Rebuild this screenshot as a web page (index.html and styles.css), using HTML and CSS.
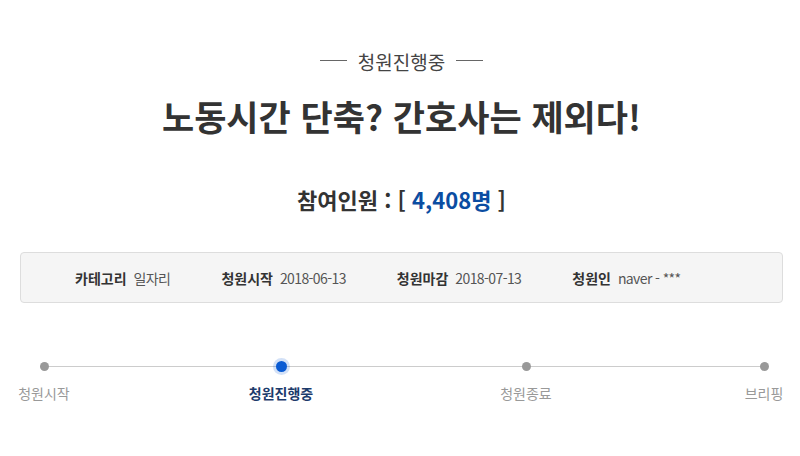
FILE: index.html
```html
<!DOCTYPE html>
<html lang="ko">
<head>
<meta charset="utf-8">
<title>청원진행중</title>
<link rel="stylesheet" href="styles.css">
</head>
<body>
<div class="wrap">
  <div class="status"><span class="dash"></span><span class="status-text">청원진행중</span><span class="dash"></span></div>
  <h1 class="title">노동시간 단축? 간호사는 제외다!</h1>
  <div class="count">참여인원 : [ <span class="num">4,408명</span> ]</div>
  <ul class="info">
    <li><strong>카테고리</strong><span>일자리</span></li>
    <li><strong>청원시작</strong><span>2018-06-13</span></li>
    <li><strong>청원마감</strong><span>2018-07-13</span></li>
    <li><strong>청원인</strong><span>naver - ***</span></li>
  </ul>
  <ol class="steps">
    <li class="step"><span class="dot"></span><span class="label">청원시작</span></li>
    <li class="step active"><span class="dot"></span><span class="label">청원진행중</span></li>
    <li class="step"><span class="dot"></span><span class="label">청원종료</span></li>
    <li class="step"><span class="dot"></span><span class="label">브리핑</span></li>
  </ol>
</div>
</body>
</html>
```
FILE: styles.css
```css
* { box-sizing: border-box; }
html, body { margin: 0; padding: 0; background: #fff; }
body {
  font-family: "Noto Sans CJK KR", "Noto Sans", sans-serif;
  color: #333;
}
.wrap {
  width: 763px;
  margin-left: 20px;
}
.status {
  margin-top: 50px;
  height: 24px;
  display: flex;
  align-items: center;
  justify-content: center;
  gap: 11px;
}
.status-text {
  font-size: 19px;
  line-height: 24px;
  color: #444;
}
.dash {
  width: 27px;
  height: 1px;
  margin-top: -4px;
  background: #666;
}
.title {
  margin: 20px 0 0;
  text-align: center;
  font-size: 35px;
  line-height: 44px;
  font-weight: 700;
  color: #333;
}
.count {
  margin-top: 46px;
  text-align: center;
  font-size: 22px;
  line-height: 30px;
  font-weight: 700;
  color: #333;
}
.count .num { color: #0b4da2; }
.info {
  list-style: none;
  margin: 38px 0 0;
  padding: 0 0 0 54px;
  height: 51px;
  border: 1px solid #ddd;
  border-radius: 4px;
  background: #f5f5f5;
  display: flex;
  align-items: center;
  gap: 51px;
  font-size: 14px;
}
.info li { display: flex; gap: 7px; align-items: baseline; }
.info strong { font-weight: 700; color: #333; }
.info span { color: #555; letter-spacing: -0.6px; }
.steps {
  list-style: none;
  margin: 58px 0 0 24px;
  padding: 0;
  width: 720px;
  display: grid;
  grid-template-columns: 237px 245px 238px 0;
  position: relative;
}
.steps::before {
  content: "";
  position: absolute;
  left: 0;
  right: 0;
  top: 5px;
  height: 1px;
  background: #ccc;
}
.step {
  width: 0;
  display: flex;
  flex-direction: column;
  align-items: center;
  position: relative;
}
.dot {
  width: 9px;
  height: 9px;
  margin: 1px 0;
  border-radius: 50%;
  background: #999;
}
.step.active .dot {
  width: 11px;
  height: 11px;
  margin: 0;
  background: #0a5bd3;
  box-shadow: 0 0 0 3px rgba(10, 91, 211, 0.18);
}
.label {
  margin-top: 11px;
  white-space: nowrap;
  font-size: 14px;
  line-height: 20px;
  color: #999;
}
.step.active .label {
  color: #1c3b6b;
  font-weight: 700;
}
```
